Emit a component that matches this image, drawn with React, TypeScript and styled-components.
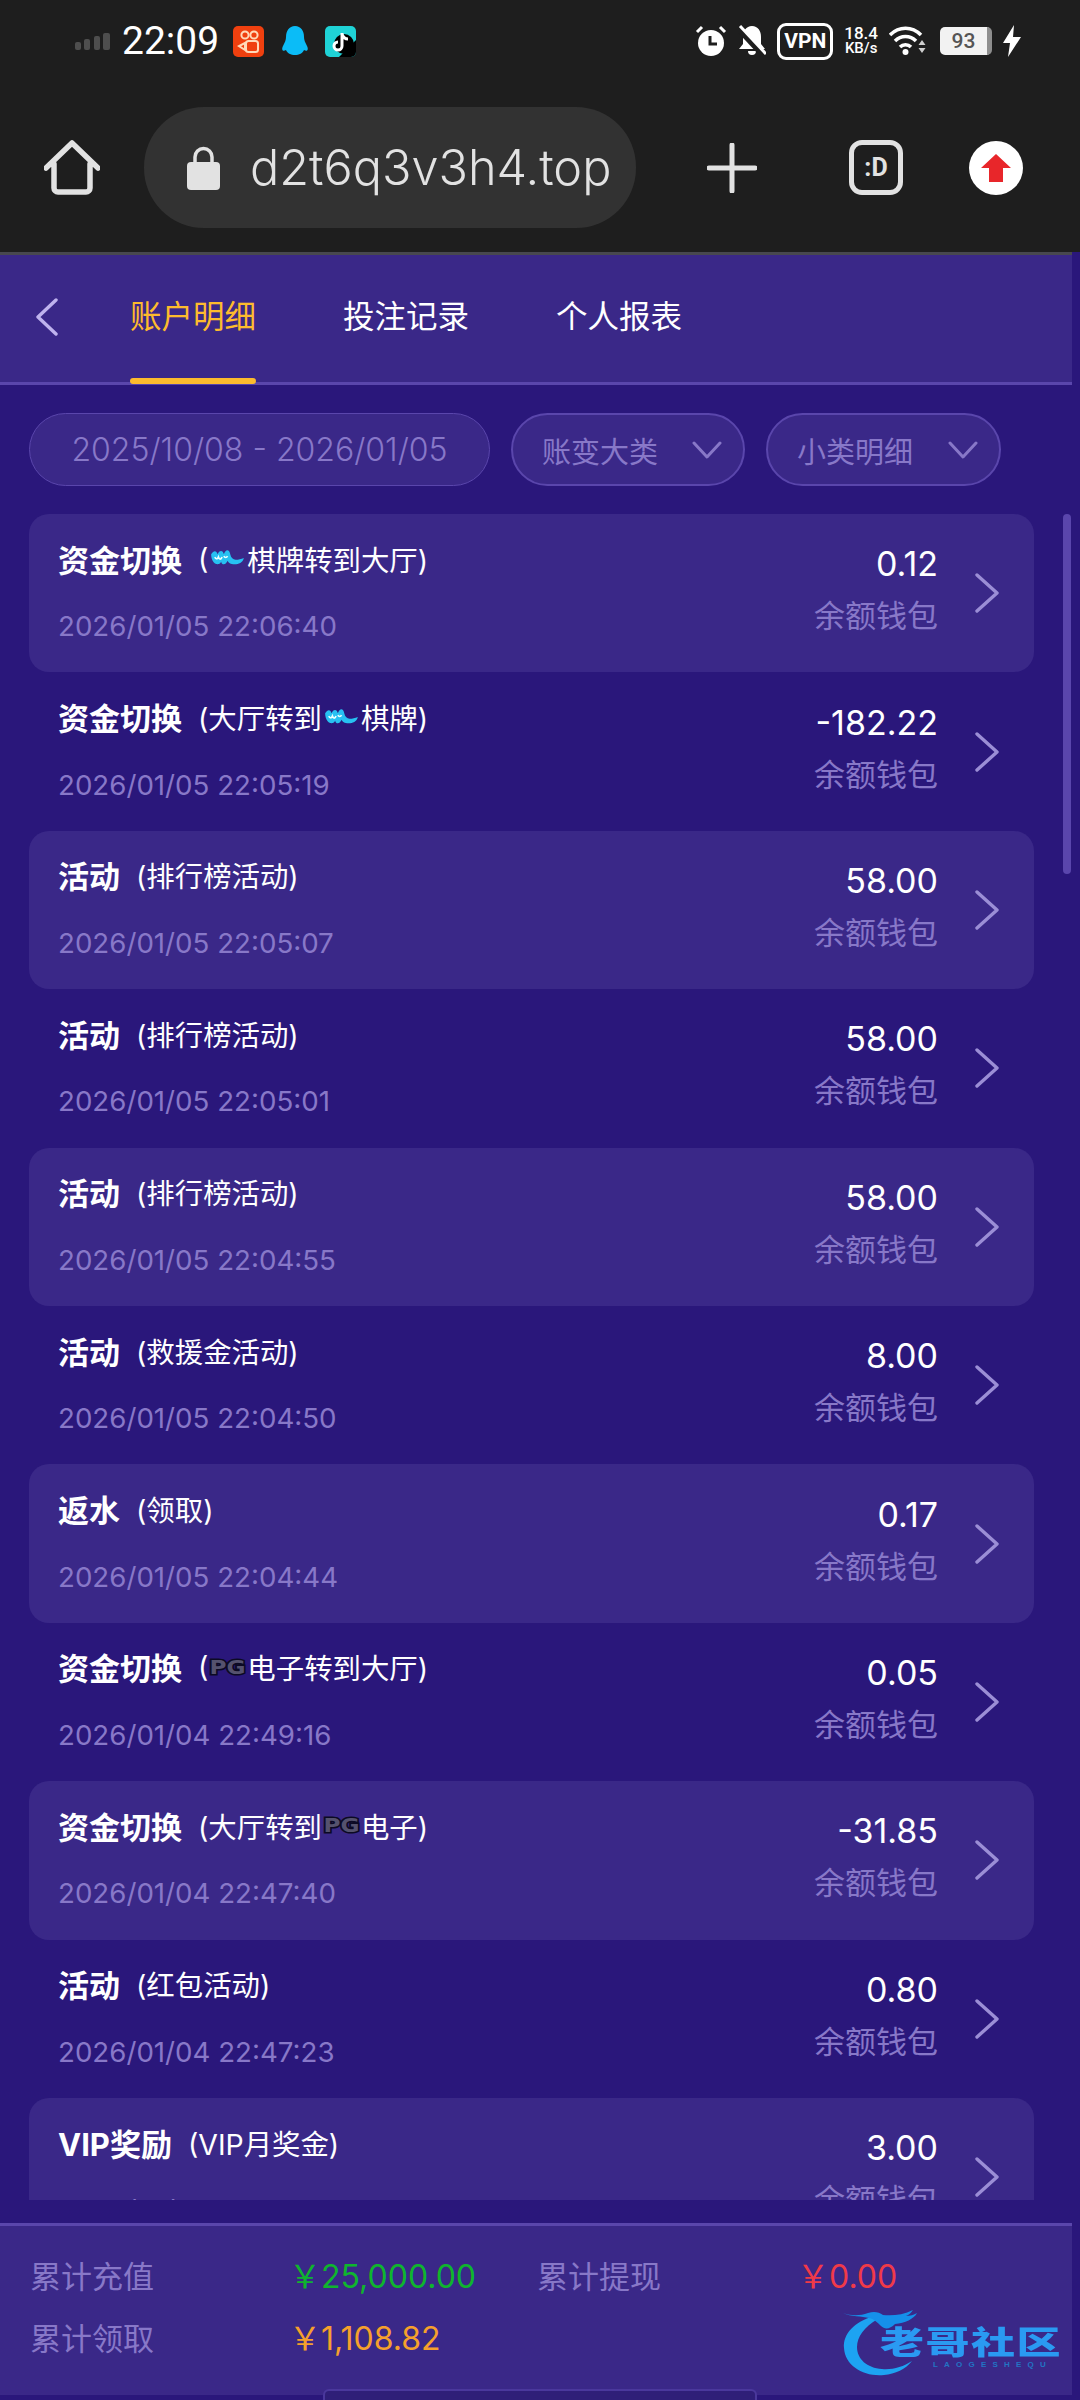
import styled, { createGlobalStyle } from 'styled-components';

const SANS = '"Inter", "Noto Sans CJK SC", sans-serif';

interface Txn {
    title: string;
    detail: React.ReactNode;
    time: string;
    amount: string;
}

const GlobalStyle = createGlobalStyle`
    html, body { margin: 0; padding: 0; background: #2a177b; }
    * { box-sizing: border-box; }
`;

const Page = styled.div`
    position: relative;
    width: 1080px;
    height: 2400px;
    overflow: hidden;
    background: #2a177b;
    font-family: ${SANS};
    display: flex;
    flex-direction: column;
`;

/* system chrome */
const StatusBar = styled.div`
    height: 82px;
    background: #1e1e1e;
    color: #fff;
    display: flex;
    align-items: center;
    justify-content: space-between;
    padding: 0 59px 0 75px;
`;

const StatusGroup = styled.div<{ $gap: number }>`
    display: flex;
    align-items: center;
    gap: ${p => p.$gap}px;
`;

const Clock = styled.span`
    font-size: 39px;
    font-weight: 400;
    line-height: 1;
    margin: 0 5px 0 3px;
    font-family: "Roboto", ${SANS};
`;

const VpnBadge = styled.span`
    width: 56px;
    height: 37px;
    border: 3px solid #fff;
    border-radius: 9px;
    font: 700 21px "Roboto", sans-serif;
    display: flex;
    align-items: center;
    justify-content: center;
`;

const Speed = styled.span`
    display: flex;
    flex-direction: column;
    align-items: center;
    font: 500 17px/15px "Roboto", sans-serif;
    & > small { font-size: 15px; }
`;

const BatteryBody = styled.span`
    width: 52px;
    height: 28px;
    background: #f2f2f2;
    border-radius: 5px;
    border-right: 5px solid #8e8e8e;
    color: #555;
    font: 500 21px "Roboto", sans-serif;
    display: flex;
    align-items: center;
    justify-content: center;
`;

const BrowserBar = styled.div`
    height: 170px;
    background: #1e1e1e;
    padding-top: 25px;
    display: grid;
    grid-template-columns: 144px 492px 192px 96px 144px;
    grid-template-rows: 121px;
    justify-items: center;
    align-items: center;
`;

const UrlPill = styled.div`
    width: 100%;
    height: 121px;
    border-radius: 60px;
    background: #323232;
    color: #e2e2e2;
    display: flex;
    align-items: center;
    padding-left: 43px;
    gap: 30px;
    font: 300 48.6px "Inter", sans-serif;
    white-space: nowrap;
`;

const SmileBox = styled.div`
    width: 54px;
    height: 55px;
    border: 5px solid #e2e2e2;
    border-radius: 13px;
    color: #e2e2e2;
    font: 700 25px "Roboto", sans-serif;
    display: flex;
    align-items: center;
    justify-content: center;
`;

const UploadDot = styled.div`
    width: 54px;
    height: 54px;
    border-radius: 50%;
    background: #fff;
    display: flex;
    align-items: center;
    justify-content: center;
`;

/* page header */
const Header = styled.div`
    height: 133px;
    margin-right: 8px;
    background: #3a2888;
    border-top: 3px solid #48484f;
    border-bottom: 3px solid #5a46ac;
    display: flex;
    padding-left: 35px;
`;

const BackButton = styled.div`
    width: 95px;
    height: 127px;
    padding-bottom: 4px;
    display: flex;
    align-items: center;
`;

const Tabs = styled.div`
    display: flex;
    gap: 87px;
`;

const Tab = styled.div<{ $active?: boolean }>`
    position: relative;
    height: 127px;
    padding-bottom: 10px;
    display: flex;
    align-items: center;
    font-size: 31.5px;
    color: ${p => (p.$active ? '#fdbb2d' : '#fff')};

    &::after {
        content: '';
        display: ${p => (p.$active ? 'block' : 'none')};
        position: absolute;
        left: 0;
        right: 0;
        bottom: -2px;
        height: 6px;
        border-radius: 3px;
        background: #fdbb2d;
    }
`;

/* filters */
const Filters = styled.div`
    display: flex;
    gap: 21px;
    padding: 28px 29px;
`;

const FilterPill = styled.div<{ $width: number; $date?: boolean }>`
    width: ${p => p.$width}px;
    height: 73px;
    border-radius: 37px;
    background: #3a2888;
    border: ${p => (p.$date ? '1px solid #5a46ac' : '2px solid #5a46ac')};
    color: #8878c8;
    font-size: ${p => (p.$date ? 32 : 29)}px;
    font-weight: ${p => (p.$date ? 300 : 400)};
    display: flex;
    align-items: center;
    justify-content: ${p => (p.$date ? 'center' : 'space-between')};
    padding: ${p => (p.$date ? '0' : '0 21px 0 29px')};
    white-space: nowrap;
`;

/* list */
const List = styled.div`
    height: 1686px;
    overflow: hidden;
    padding: 0 46px 0 29px;
`;

const Row = styled.div<{ $card: boolean }>`
    height: 158.4px;
    border-radius: 20px;
    background: ${p => (p.$card ? '#3a2888' : 'transparent')};
    padding: 0 34px 0 29px;
    display: flex;
    align-items: center;
`;

const RowMain = styled.div`
    flex: 1;
    display: flex;
    flex-direction: column;
    gap: 30px;
    margin-bottom: 2px;
`;

const RowTitle = styled.div`
    display: flex;
    align-items: center;
    height: 38px;
    color: #fff;
    white-space: nowrap;
`;

const TitleStrong = styled.span`
    font-size: 31px;
    font-weight: 700;
    margin-right: 16px;
`;

const TitleDetail = styled.span`
    font-size: 28.4px;
    display: inline-flex;
    align-items: center;
`;

const RowTime = styled.div`
    color: #8878c8;
    font-size: 27.7px;
    line-height: 38px;
`;

const RowSide = styled.div`
    display: flex;
    flex-direction: column;
    align-items: flex-end;
    gap: 14px;
    margin: 0 36px 6px 0;
`;

const Amount = styled.div`
    color: #fff;
    font-size: 34px;
    line-height: 38px;
`;

const Wallet = styled.div`
    color: #8878c8;
    font-size: 31px;
    line-height: 38px;
`;

const ScrollThumb = styled.div`
    position: absolute;
    left: 1063px;
    top: 514px;
    width: 8px;
    height: 360px;
    border-radius: 4px;
    background: #5a46ac;
`;

/* footer */
const Footer = styled.div`
    position: relative;
    margin: 23px 8px 0 0;
    height: 172px;
    background: #3a2888;
    border-top: 3px solid #5a46ac;
    padding: 17px 0 0 30px;
    display: grid;
    grid-template-columns: 259px 248px 260px auto;
    grid-auto-rows: 62px;
    align-items: center;
`;

const SumLabel = styled.div`
    color: #8878c8;
    font-size: 31px;
`;

const SumValue = styled.div<{ $color: string }>`
    color: ${p => p.$color};
    font-size: 32px;
    white-space: nowrap;
`;

const Watermark = styled.div`
    position: absolute;
    left: 840px;
    top: 2305px;
    width: 225px;
    height: 72px;
`;

const WatermarkName = styled.span`
    position: absolute;
    left: 40px;
    top: 8px;
    color: #2a9af2;
    font: 900 44px/54px "Noto Sans CJK SC", sans-serif;
    letter-spacing: 1.500px;
    white-space: nowrap;
    transform: scaleY(0.72);
    filter: blur(0.5px);
`;

const WatermarkPinyin = styled.span`
    position: absolute;
    left: 93px;
    top: 55px;
    color: #2274c4;
    font: 700 8px "Liberation Sans", sans-serif;
    letter-spacing: 6.200px;
    white-space: nowrap;
`;

const NavHandle = styled.div`
    position: absolute;
    left: 323px;
    top: 2389px;
    width: 434px;
    height: 11px;
    border-radius: 6px 6px 0 0;
    background: #2f1f78;
    border: 2px solid #4a389c;
    border-bottom: none;
`;

const BottomEdge = styled.div`
    flex: 1;
    background: #2a177b;
`;

const WlLogo = () => (
    <svg width="35" height="20" viewBox="0 0 38 22" style={{ margin: '0 2px' }}>
        <path d="M1 7c3-5 6-4 7 0 2-5 6-5 7 0 2-6 6-6 7 0 1 4 3 6 6 6 3 0 6-1 9-2-1 5-6 7-10 7-5 0-7-2-8-4-2 5-6 5-7 1-2 4-6 3-8 1-2-2-3-6-3-9z" fill="#27c1f2" />
        <path d="M5 10c1 2 3 3 4 0 1 3 3 3 4 0M15 9c1 2 3 2 4 0" stroke="#eaffff" strokeWidth="1.800" fill="none" />
    </svg>
);

const PgLogo = () => (
    <svg width="39" height="22" viewBox="0 0 39 22">
        <text
            x="19.500"
            y="17.500"
            textAnchor="middle"
            textLength="36"
            lengthAdjust="spacingAndGlyphs"
            fontFamily="DejaVu Sans, sans-serif"
            fontWeight="700"
            fontSize="19"
            fill="#55526e"
            stroke="#0c0a24"
            strokeWidth="3"
            paintOrder="stroke"
        >
            PG
        </text>
    </svg>
);

const rows: Txn[] = [
    { title: '资金切换', detail: <>(<WlLogo />棋牌转到大厅)</>, time: '2026/01/05 22:06:40', amount: '0.12' },
    { title: '资金切换', detail: <>(大厅转到<WlLogo />棋牌)</>, time: '2026/01/05 22:05:19', amount: '-182.22' },
    { title: '活动', detail: '(排行榜活动)', time: '2026/01/05 22:05:07', amount: '58.00' },
    { title: '活动', detail: '(排行榜活动)', time: '2026/01/05 22:05:01', amount: '58.00' },
    { title: '活动', detail: '(排行榜活动)', time: '2026/01/05 22:04:55', amount: '58.00' },
    { title: '活动', detail: '(救援金活动)', time: '2026/01/05 22:04:50', amount: '8.00' },
    { title: '返水', detail: '(领取)', time: '2026/01/05 22:04:44', amount: '0.17' },
    { title: '资金切换', detail: <>(<PgLogo />电子转到大厅)</>, time: '2026/01/04 22:49:16', amount: '0.05' },
    { title: '资金切换', detail: <>(大厅转到<PgLogo />电子)</>, time: '2026/01/04 22:47:40', amount: '-31.85' },
    { title: '活动', detail: '(红包活动)', time: '2026/01/04 22:47:23', amount: '0.80' },
    { title: 'VIP奖励', detail: '(VIP月奖金)', time: '2026/01/04 22:47:13', amount: '3.00' },
];

const Caret = ({ color }: { color: string }) => (
    <svg width="30" height="20" viewBox="0 0 30 20">
        <path d="M2 3l13 14L28 3" fill="none" stroke={color} strokeWidth="3" strokeLinecap="round" strokeLinejoin="round" />
    </svg>
);

const Chevron = () => (
    <svg width="26" height="40" viewBox="0 0 26 40">
        <path d="M3 2l20 18L3 38" fill="none" stroke="#9b8ed6" strokeWidth="3.400" strokeLinecap="round" strokeLinejoin="round" />
    </svg>
);

export default function App() {
    return (
        <Page>
            <GlobalStyle />
            <StatusBar>
                <StatusGroup $gap={9}>
                    <svg width="35" height="18" viewBox="0 0 35 18">
                        <rect x="0" y="10" width="6" height="8" rx="2" fill="#4e4e4e" />
                        <rect x="9" y="7" width="6" height="11" rx="2" fill="#4e4e4e" />
                        <rect x="19" y="4" width="6" height="14" rx="2" fill="#4e4e4e" />
                        <rect x="28" y="1" width="7" height="17" rx="2" fill="#4e4e4e" />
                    </svg>
                    <Clock>22:09</Clock>
                    <svg width="31" height="31" viewBox="0 0 31 31">
                        <rect width="31" height="31" rx="5" fill="#f0400f" />
                        <circle cx="12" cy="9" r="3.600" fill="none" stroke="#ffd9b8" strokeWidth="2" />
                        <circle cx="21" cy="9" r="3.600" fill="none" stroke="#ffd9b8" strokeWidth="2" />
                        <rect x="13" y="15" width="12" height="11" rx="2.500" fill="none" stroke="#ffd9b8" strokeWidth="2" />
                        <path d="M12 17l-6 3 6 4z" fill="none" stroke="#ffd9b8" strokeWidth="2" />
                    </svg>
                    <svg width="30" height="32" viewBox="0 0 30 32" style={{ marginLeft: 7 }}>
                        <path d="M15 1c6 0 9 5 9 11 0 3 1 5 3 9 2 4 0 6-3 4-1 3-5 5-9 5s-8-2-9-5c-3 2-5 0-3-4 2-4 3-6 3-9C6 6 9 1 15 1z" fill="#0bbcf7" />
                    </svg>
                    <svg width="31" height="31" viewBox="0 0 31 31" style={{ marginLeft: 6 }}>
                        <rect width="31" height="31" rx="5" fill="#1fd3d6" />
                        <path d="M14 31L31 14v12a5 5 0 0 1-5 5z" fill="#000" />
                        <circle cx="19" cy="18" r="10" fill="#000" />
                        <path d="M17 7v13a4 4 0 1 1-4-4M17 8c1 3 3 5 6 5" fill="none" stroke="#fff" strokeWidth="3" />
                    </svg>
                </StatusGroup>
                <StatusGroup $gap={11}>
                    <svg width="32" height="32" viewBox="0 0 32 32">
                        <circle cx="16" cy="18" r="13" fill="#fff" />
                        <path d="M15 11v8h7" fill="none" stroke="#1e1e1e" strokeWidth="3" />
                        <path d="M2 7l5-5M30 7l-5-5" stroke="#fff" strokeWidth="3" />
                    </svg>
                    <svg width="28" height="32" viewBox="0 0 28 32">
                        <path d="M14 1c6 0 9 5 9 11v7l4 5H1l4-5v-7C5 6 8 1 14 1zM10 26h8a4 4 0 0 1-8 0z" fill="#fff" />
                        <path d="M0 3l26 28" stroke="#1e1e1e" strokeWidth="6" />
                        <path d="M2 1l26 28" stroke="#fff" strokeWidth="3" />
                    </svg>
                    <VpnBadge>VPN</VpnBadge>
                    <Speed>
                        <span>18.4</span>
                        <small>KB/s</small>
                    </Speed>
                    <svg width="40" height="30" viewBox="0 0 40 30">
                        <path d="M1 9c9-9 22-9 31 0M6 15c6-6 15-6 21 0M11 21c3-3 8-3 11 0" fill="none" stroke="#fff" strokeWidth="3.500" />
                        <circle cx="16.500" cy="26" r="3" fill="#fff" />
                        <path d="M33 14l3.500 5h-7zM33 27l3.500-5h-7z" fill="#cfcfcf" />
                    </svg>
                    <BatteryBody>93</BatteryBody>
                    <svg width="18" height="32" viewBox="0 0 18 32">
                        <path d="M11 0L0 18h7l-2 14 13-20h-8z" fill="#fff" />
                    </svg>
                </StatusGroup>
            </StatusBar>

            <BrowserBar>
                <svg width="56" height="56" viewBox="0 0 56 56">
                    <path d="M2 28L28 3l26 25M10 24v24a4 4 0 0 0 4 4h28a4 4 0 0 0 4-4V24" fill="none" stroke="#e2e2e2" strokeWidth="5.500" strokeLinecap="round" strokeLinejoin="round" />
                </svg>
                <UrlPill>
                    <svg width="33" height="44" viewBox="0 0 33 44">
                        <path d="M8 18v-7a8.500 8.500 0 0 1 17 0v7" fill="none" stroke="#e2e2e2" strokeWidth="3.500" />
                        <rect y="16" width="33" height="28" rx="4" fill="#e2e2e2" />
                    </svg>
                    d2t6q3v3h4.top
                </UrlPill>
                <svg width="50" height="50" viewBox="0 0 50 50">
                    <path d="M25 2v46M2 25h46" stroke="#e2e2e2" strokeWidth="5" strokeLinecap="round" />
                </svg>
                <SmileBox>:D</SmileBox>
                <UploadDot>
                    <svg width="30" height="28" viewBox="0 0 30 28">
                        <path d="M15 0l15 14h-8v14H8V14H0z" fill="#e8262a" />
                    </svg>
                </UploadDot>
            </BrowserBar>

            <Header>
                <BackButton>
                    <svg width="24" height="38" viewBox="0 0 24 38">
                        <path d="M21 2L3 19l18 17" fill="none" stroke="#bfb3ee" strokeWidth="3.400" strokeLinecap="round" strokeLinejoin="round" />
                    </svg>
                </BackButton>
                <Tabs>
                    <Tab $active>账户明细</Tab>
                    <Tab>投注记录</Tab>
                    <Tab>个人报表</Tab>
                </Tabs>
            </Header>

            <Filters>
                <FilterPill $width={461} $date>2025/10/08 - 2026/01/05</FilterPill>
                <FilterPill $width={234}>账变大类<Caret color="#8878c8" /></FilterPill>
                <FilterPill $width={235}>小类明细<Caret color="#8878c8" /></FilterPill>
            </Filters>

            <List>
                {rows.map((row, i) => (
                    <Row key={row.time} $card={i % 2 === 0}>
                        <RowMain>
                            <RowTitle>
                                <TitleStrong>{row.title}</TitleStrong>
                                <TitleDetail>{row.detail}</TitleDetail>
                            </RowTitle>
                            <RowTime>{row.time}</RowTime>
                        </RowMain>
                        <RowSide>
                            <Amount>{row.amount}</Amount>
                            <Wallet>余额钱包</Wallet>
                        </RowSide>
                        <Chevron />
                    </Row>
                ))}
            </List>
            <ScrollThumb />

            <Footer>
                <SumLabel>累计充值</SumLabel>
                <SumValue $color="#0fb52e">￥25,000.00</SumValue>
                <SumLabel>累计提现</SumLabel>
                <SumValue $color="#f03a48">￥0.00</SumValue>
                <SumLabel>累计领取</SumLabel>
                <SumValue $color="#f5a02c">￥1,108.82</SumValue>
            </Footer>
            <BottomEdge />

            <Watermark>
                <svg width="90" height="72" viewBox="0 0 90 72">
                    <path d="M34 11C14 17 3 29 4 43c1 18 20 29 40 27 11-1 22-6 28-14-9 6-20 9-30 8-15-1-25-10-25-22 0-10 7-20 21-28z" fill="#1da3f2" />
                    <path d="M3 8c8 3 17 3 25 0 6-2 11-1 15 2 9 1 20 0 30-5-2 3-4 5-7 6 4 0 8-1 11-3-3 6-12 10-22 11-5 5-10 6-14 2-4-4-7-7-12-8C22 11 11 12 3 8z" fill="#1590ea" />
                </svg>
                <WatermarkName>老哥社区</WatermarkName>
                <WatermarkPinyin>LAOGESHEQU</WatermarkPinyin>
            </Watermark>
            <NavHandle />
        </Page>
    );
}
